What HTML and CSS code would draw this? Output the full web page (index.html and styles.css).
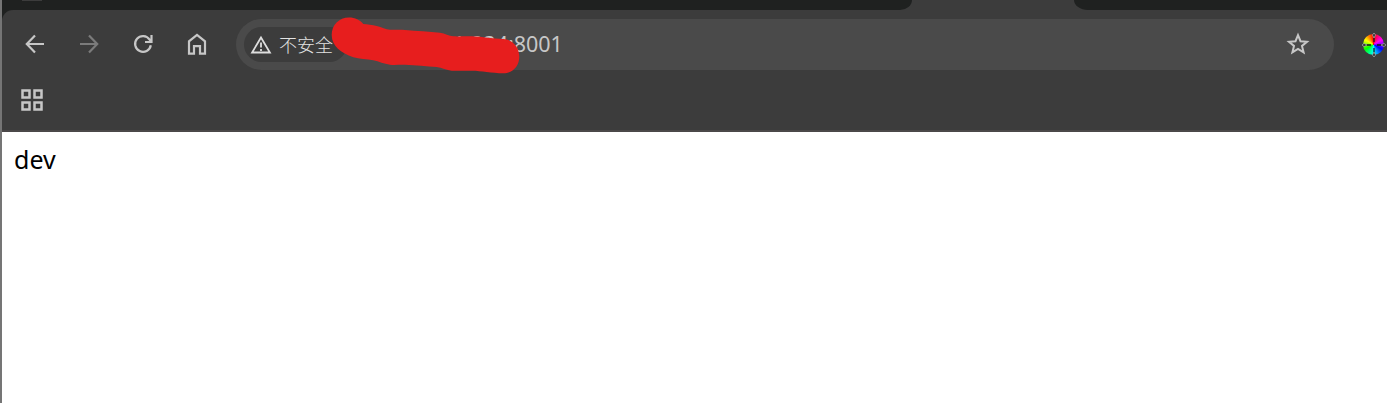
FILE: index.html
```html
<!DOCTYPE html>
<html lang="zh-CN">
<head>
<meta charset="utf-8">
<title>dev</title>
<link rel="stylesheet" href="styles.css">
</head>
<body>
<div class="window">
  <header class="chrome">
    <div class="tabstrip">
      <div class="tabs tabs-left"><span class="tab-button"></span></div>
      <div class="active-tab"></div>
      <div class="tabs tabs-right"></div>
    </div>
    <div class="panel">
      <div class="toolbar">
        <nav class="nav">
          <svg class="icon" viewBox="0 0 24 24"><path d="M21 12H4M12 3.500 3.800 12l8.200 8.500"/></svg>
          <svg class="icon icon-disabled" viewBox="0 0 24 24"><path d="M3 12h17M12 3.500 20.200 12 12 20.500"/></svg>
          <svg class="icon" viewBox="0 0 24 24"><path d="M19.800 13.200A7.900 7.900 0 1 1 18.600 7.600L20 9.500M20.500 3v7H14"/></svg>
          <svg class="icon" viewBox="0 0 24 24"><path d="M4 21.700V9.300l8-6.300 8 6.300v12.400h-5v-7.500H9v7.500z"/></svg>
        </nav>
        <div class="omnibox">
          <div class="chip">
            <svg class="warning" viewBox="0 0 22 20"><path d="M11 2.500 2.100 17.500h17.800z"/><path d="M11 7.500v5M11 14v2"/></svg>
            <span>不安全</span>
          </div>
          <span class="url">1.234:8001</span>
          <svg class="star" viewBox="0 0 24 24"><path d="m12 3.200 2.500 6 6.500.5-5 4.200 1.600 6.500L12 17l-5.600 3.400L8 13.900 3 9.700l6.500-.5z"/></svg>
          <svg class="scribble" viewBox="0 0 190 60"><path d="M.7 17C.7 7 8-.5 18-.5c6 0 11 2.500 14.300 6.500 4 .2 9 1 13.400 2 5 1.200 9 3.500 13.300 3.700 5 .3 10-.2 15 .3 12 1 24 1.700 35 2.700 5 .6 9 3.300 13.300 3.600 6 .3 12-.3 18.400 0 11 .6 21 2.200 31.600 2.700 9 .4 16 8 16 17.700 0 9.600-7 16.600-16 16.600-6 0-11-.8-16.600-1.300-5-.6-10-1.300-15-1.300h-20c-5-.6-10-3-15-3.700-10-1-21-1.500-31.700-2.300-5-.2-10 .5-15 0-6-.7-11-3.200-16.700-4.400-6.500-1.400-14-1-20-3C10 35 .7 28 .7 17z"/></svg>
        </div>
        <div class="wheel"><svg viewBox="0 0 26 26"><path d="M13 3v7M13 16v7M3 13h7M16 13h7"/><path class="handle" d="m13 1 1.500 2-1.500 3-1.500-3zM13 25l1.500-2-1.500-3-1.500 3zM1 13l2-1.500L6 13l-3 1.500zM25 13l-2-1.500-3 1.500 3 1.500z"/></svg></div>
      </div>
      <div class="bookmarks">
        <svg class="apps" viewBox="0 0 22 22"><path d="M1.500 1.500h7v7h-7zM13.500 1.500h7v7h-7zM1.500 13.500h7v7h-7zM13.500 13.500h7v7h-7z"/></svg>
      </div>
    </div>
  </header>
  <main class="page">dev</main>
</div>
</body>
</html>
```
FILE: styles.css
```css
* { box-sizing: border-box; }
body {
  margin: 0;
  overflow: hidden;
  font-family: "Noto Sans", "Noto Sans CJK SC", sans-serif;
}
svg { display: block; fill: none; }
.window {
  height: 403px;
  border-left: 2px solid #757575;
  background: #fff;
  overflow: hidden;
}
.chrome { background: #1f2120; }
.tabstrip {
  display: flex;
  height: 10px;
  background: #3c3c3c;
}
.tabs { background: #1f2120; }
.tabs-left { width: 910px; border-bottom-right-radius: 12px 10px; }
.tabs-right { flex: 1; border-bottom-left-radius: 14px 10px; }
.active-tab { width: 162px; }
.tab-button {
  display: block;
  width: 20px;
  height: 1px;
  margin-left: 20px;
  background: #3c3c3c;
}
.panel {
  height: 122px;
  border-top-left-radius: 11px;
  border-bottom: 2px solid #4b4849;
  background: #3c3c3c;
}
.toolbar {
  display: flex;
  align-items: center;
  height: 69px;
}
.nav {
  display: flex;
  gap: 30px;
  width: 234px;
  padding: 0 0 1px 21px;
}
.icon {
  width: 24px;
  height: 24px;
  stroke: #c7c7c7;
  stroke-width: 2.2;
}
.icon-disabled { stroke: #7b7b7b; }
.omnibox {
  position: relative;
  display: flex;
  align-items: center;
  width: 1098px;
  height: 51px;
  padding: 0 24px 0 8px;
  border-radius: 26px;
  background: #4a4a4a;
}
.chip {
  display: flex;
  align-items: center;
  gap: 7px;
  width: 103px;
  height: 35px;
  padding-left: 6px;
  border-radius: 18px;
  background: #3c3c3c;
  color: #e3e3e3;
  font: 300 18px/35px "Noto Sans CJK SC", sans-serif;
  white-space: nowrap;
}
.warning {
  width: 22px;
  height: 20px;
  stroke: #dedede;
  stroke-width: 1.8;
}
.url {
  margin-left: 106px;
  padding-bottom: 2px;
  color: #c7c7c7;
  font-size: 21.500px;
  line-height: 30px;
}
.star {
  width: 24px;
  height: 25px;
  margin-left: auto;
  padding-bottom: 1px;
  stroke: #c7c7c7;
  stroke-width: 2;
}
.scribble {
  position: absolute;
  left: 95px;
  top: -1px;
  width: 190px;
  height: 60px;
  overflow: visible;
}
.scribble path { fill: #e71e1e; }
.wheel {
  flex: none;
  width: 21px;
  height: 21px;
  margin-left: 29px;
  border-radius: 50%;
  background: conic-gradient(#f00, #f0f 60deg, #00f 120deg, #0ff 180deg, #0f0 240deg, #ff0 300deg, #f00);
}
.wheel svg {
  width: 26px;
  height: 26px;
  margin: -2.500px;
  stroke: #171717;
  stroke-width: 1.3;
}
.wheel .handle { fill: #222; stroke: #aaa; stroke-width: .8; }
.bookmarks { padding: 10px 0 0 19px; }
.apps {
  width: 22px;
  height: 22px;
  stroke: #c7c7c7;
  stroke-width: 2.500;
}
.page {
  padding: 9px 12px;
  color: #000;
  font-size: 25px;
  line-height: 36px;
}
```
